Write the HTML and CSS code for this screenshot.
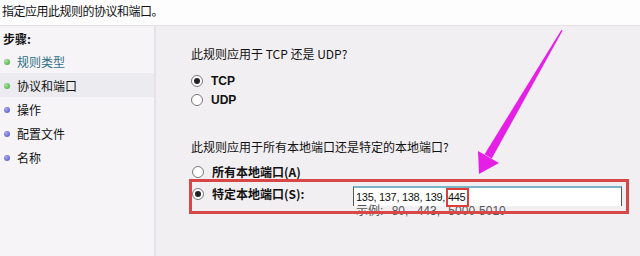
FILE: index.html
```html
<!DOCTYPE html>
<html lang="zh-CN">
<head>
<meta charset="utf-8">
<link rel="stylesheet" href="styles.css">
</head>
<body>
<div class="page">
  <header class="header">指定应用此规则的协议和端口。</header>
  <div class="content">
    <nav class="sidebar">
      <div class="steps-title">步骤:</div>
      <ul class="steps">
        <li class="step done link"><span class="dot green"></span>规则类型</li>
        <li class="step current"><span class="dot green"></span>协议和端口</li>
        <li class="step"><span class="dot blue"></span>操作</li>
        <li class="step"><span class="dot blue"></span>配置文件</li>
        <li class="step"><span class="dot blue"></span>名称</li>
      </ul>
    </nav>
    <main class="main">
      <p class="question">此规则应用于 TCP 还是 UDP?</p>
      <div class="radio-group">
        <label class="radio-row"><span class="radio checked"></span><span class="radio-label">TCP</span></label>
        <label class="radio-row"><span class="radio"></span><span class="radio-label">UDP</span></label>
      </div>
      <p class="question q2">此规则应用于所有本地端口还是特定的本地端口?</p>
      <div class="ports">
        <label class="radio-row port-row"><span class="radio"></span><span class="radio-label">所有本地端口(A)</span></label>
        <div class="specific">
          <label class="radio-row port-row spec-label"><span class="radio checked"></span><span class="radio-label">特定本地端口(S):</span></label>
          <div class="field">
            <div class="input"><span class="val">135, 137, 138, 139, <span class="hl">445</span></span></div>
            <div class="example">示例: 80, 443, 5000-5010</div>
          </div>
          <div class="redbox"></div>
        </div>
      </div>
    </main>
  </div>
  <svg class="arrow" width="640" height="256" viewBox="0 0 640 256">
    <polygon points="561.3,30 562.6,30.6 491.8,158.5 484.6,154.2" fill="#e61fe6"/>
    <polygon points="479,174 478,151 499,163" fill="#e61fe6"/>
  </svg>
</div>
</body>
</html>
```
FILE: styles.css
```css
html, body {
  margin: 0;
  padding: 0;
}
body {
  width: 640px;
  height: 256px;
  overflow: hidden;
  background: #f2eff3;
  font-family: "Noto Sans CJK SC", "Liberation Sans", sans-serif;
  font-size: 12px;
  color: #111;
}
.page {
  position: relative;
  width: 640px;
  height: 256px;
}
.header {
  height: 25px;
  line-height: 22px;
  padding-left: 2px;
  background: #fdfdfd;
  border-bottom: 1px solid #e4e0e6;
  font-size: 12px;
  letter-spacing: -0.5px;
}
.content {
  display: flex;
  height: 230px;
}
.sidebar {
  width: 154px;
  background: #f6f4f7;
  border-right: 2px solid #e6e3e8;
  padding-top: 3px;
}
.steps-title {
  font-weight: bold;
  padding-left: 3px;
  height: 20px;
  line-height: 20px;
}
.steps {
  list-style: none;
  margin: 0;
  padding: 0;
}
.step {
  display: flex;
  align-items: center;
  height: 24px;
  padding-left: 4px;
}
.step.current {
  background: #ecebef;
}
.step.link {
  color: #2f6f86;
}
.dot {
  width: 6px;
  height: 6px;
  border-radius: 50%;
  margin-right: 7px;
  margin-top: 1px;
}
.dot.green {
  background: radial-gradient(circle at 35% 35%, #a9e79a, #3d9d3a);
}
.dot.blue {
  background: radial-gradient(circle at 35% 35%, #a6a8ee, #4a4fb0);
}
.main {
  flex: 1;
  padding: 21px 0 0 35px;
}
.question {
  margin: 0;
  height: 14px;
  line-height: 14px;
}
.radio-group {
  margin-top: 10px;
  display: flex;
  flex-direction: column;
}
.radio-row {
  display: flex;
  align-items: center;
  height: 19px;
}
.radio {
  width: 10px;
  height: 10px;
  border: 1px solid #7a7a7a;
  border-radius: 50%;
  background: #fff;
  margin-left: 0;
  margin-right: 8px;
  position: relative;
  box-sizing: content-box;
}
.radio.checked::after {
  content: "";
  position: absolute;
  left: 2px;
  top: 2px;
  width: 6px;
  height: 6px;
  border-radius: 50%;
  background: #222;
}
.radio-label {
  font-family: "Liberation Sans", "Noto Sans CJK SC", sans-serif;
  font-weight: bold;
  font-size: 12px;
}
.q2 {
  margin-top: 31px;
}
.ports {
  margin-top: 8px;
  display: flex;
  flex-direction: column;
  padding-left: 1px;
}
.port-row .radio-label {
  font-family: "Noto Sans CJK SC", sans-serif;
}
.specific {
  position: relative;
  display: flex;
  align-items: flex-start;
  height: 34px;
}
.spec-label {
  width: 161px;
  margin-top: 3px;
}
.field {
  display: flex;
  flex-direction: column;
  margin-top: 5px;
}
.input {
  width: 265px;
  height: 18px;
  background: #fff;
  border-top: 2px solid #78b6c6;
  border-left: 1px solid #555;
  border-right: 1px solid #555;
  display: flex;
  align-items: center;
  padding-left: 2px;
  font-family: "Liberation Sans", sans-serif;
  font-size: 11px;
  letter-spacing: -0.3px;
}
.val {
  position: relative;
}
.hl {
  position: relative;
}
.hl::after {
  content: "";
  position: absolute;
  left: -2px;
  right: -4px;
  top: -3px;
  bottom: -4px;
  border: 2px solid #e03c3c;
}
.example {
  padding-left: 3px;
  margin-top: -1px;
  color: #555;
  font-family: "Liberation Sans", "Noto Sans CJK SC", sans-serif;
  font-size: 12px;
  line-height: 12px;
  word-spacing: 5px;
}
.redbox {
  position: absolute;
  left: -3px;
  top: -2px;
  width: 434px;
  height: 29px;
  border: 3px solid #d84646;
  pointer-events: none;
}
.arrow {
  position: absolute;
  left: 0;
  top: 0;
  pointer-events: none;
}
```
